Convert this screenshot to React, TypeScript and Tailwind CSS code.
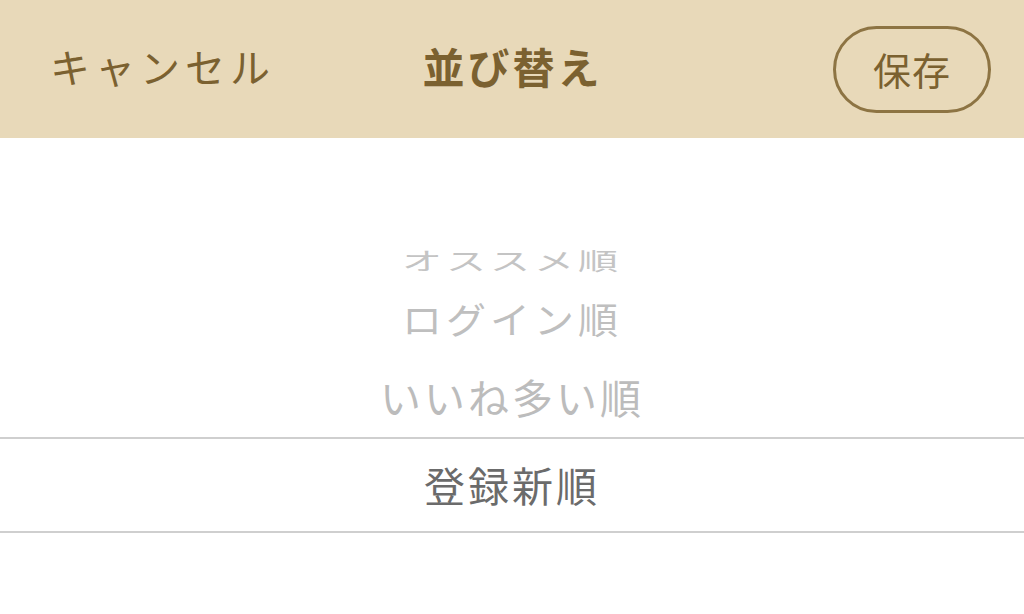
export default function App() {
  return (
    <div className="w-[1024px] h-[614px] bg-white overflow-hidden font-['Noto_Sans_CJK_JP',sans-serif]">
      {/* header */}
      <div className="h-[138px] bg-[#e8d9b9] flex items-center px-[33px] pb-[6px]">
        <div className="flex-1 pl-[17px] text-[40px] text-[#7b6130] tracking-[5px] leading-none">キャンセル</div>
        <div className="mr-[16px] text-[42px] font-bold text-[#7b6130] tracking-[3px] leading-none">並び替え</div>
        <div className="flex-1 flex justify-end pt-[6px]">
          <button className="w-[158px] h-[87px] rounded-full border-[3px] border-[#8d7443] text-[38px] text-[#7b6130] leading-none tracking-[1px]">
            保存
          </button>
        </div>
      </div>

      {/* picker wheel */}
      <div className="flex flex-col pt-[93px]">
        <div className="h-[58px] flex items-center justify-center text-[40px] text-[#c4c4c4] tracking-[4px] scale-y-[0.6]">
          オススメ順
        </div>
        <div className="h-[58px] flex items-center justify-center text-[40px] text-[#bfbfbf] tracking-[4px] scale-y-[0.92]">
          ログイン順
        </div>
        <div className="h-[90px] pt-[10px] flex items-center justify-center text-[41px] text-[#bcbcbc] tracking-[3px]">
          いいね多い順
        </div>
        <div className="h-[96px] border-y-2 border-[#cfcfcf] flex items-center justify-center text-[41px] text-[#6b6b6b] tracking-[3px]">
          登録新順
        </div>
      </div>
    </div>
  );
}
